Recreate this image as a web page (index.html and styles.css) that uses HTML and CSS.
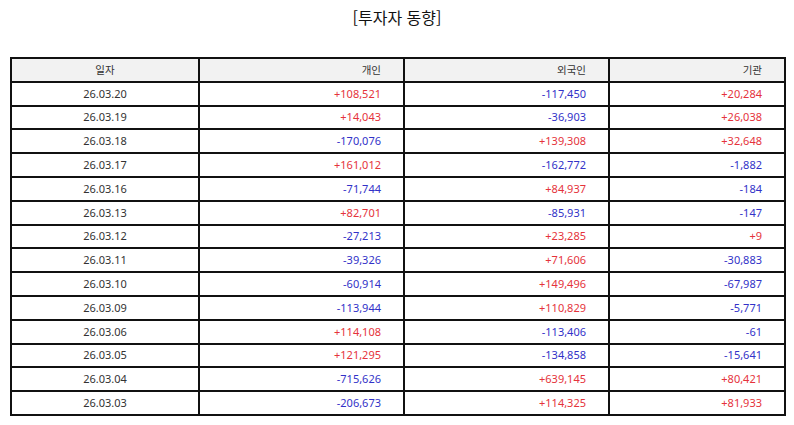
FILE: index.html
```html
<!DOCTYPE html>
<html lang="ko">
<head>
<meta charset="utf-8">
<link rel="stylesheet" href="styles.css">
</head>
<body>
<div class="page">
  <h1 class="title">[투자자 동향]</h1>
  <table class="grid">
    <colgroup>
      <col class="c1"><col class="c2"><col class="c3"><col class="c4">
    </colgroup>
    <thead>
      <tr><th class="date">일자</th><th class="num">개인</th><th class="num">외국인</th><th class="num last">기관</th></tr>
    </thead>
    <tbody>
      <tr><td class="date">26.03.20</td><td class="num up">+108,521</td><td class="num down">-117,450</td><td class="num last up">+20,284</td></tr>
      <tr><td class="date">26.03.19</td><td class="num up">+14,043</td><td class="num down">-36,903</td><td class="num last up">+26,038</td></tr>
      <tr><td class="date">26.03.18</td><td class="num down">-170,076</td><td class="num up">+139,308</td><td class="num last up">+32,648</td></tr>
      <tr><td class="date">26.03.17</td><td class="num up">+161,012</td><td class="num down">-162,772</td><td class="num last down">-1,882</td></tr>
      <tr><td class="date">26.03.16</td><td class="num down">-71,744</td><td class="num up">+84,937</td><td class="num last down">-184</td></tr>
      <tr><td class="date">26.03.13</td><td class="num up">+82,701</td><td class="num down">-85,931</td><td class="num last down">-147</td></tr>
      <tr><td class="date">26.03.12</td><td class="num down">-27,213</td><td class="num up">+23,285</td><td class="num last up">+9</td></tr>
      <tr><td class="date">26.03.11</td><td class="num down">-39,326</td><td class="num up">+71,606</td><td class="num last down">-30,883</td></tr>
      <tr><td class="date">26.03.10</td><td class="num down">-60,914</td><td class="num up">+149,496</td><td class="num last down">-67,987</td></tr>
      <tr><td class="date">26.03.09</td><td class="num down">-113,944</td><td class="num up">+110,829</td><td class="num last down">-5,771</td></tr>
      <tr><td class="date">26.03.06</td><td class="num up">+114,108</td><td class="num down">-113,406</td><td class="num last down">-61</td></tr>
      <tr><td class="date">26.03.05</td><td class="num up">+121,295</td><td class="num down">-134,858</td><td class="num last down">-15,641</td></tr>
      <tr><td class="date">26.03.04</td><td class="num down">-715,626</td><td class="num up">+639,145</td><td class="num last up">+80,421</td></tr>
      <tr><td class="date">26.03.03</td><td class="num down">-206,673</td><td class="num up">+114,325</td><td class="num last up">+81,933</td></tr>
    </tbody>
  </table>
</div>
</body>
</html>
```
FILE: styles.css
```css
html, body {
  margin: 0;
  padding: 0;
  background: #ffffff;
}
body {
  font-family: "Noto Sans", "Noto Sans CJK KR", sans-serif;
  color: #333333;
}
.page {
  padding: 0 10px;
}
.title {
  margin: 0;
  padding-top: 5px;
  height: 57px;
  box-sizing: border-box;
  text-align: center;
  font-size: 16px;
  font-weight: 400;
  line-height: 24px;
  color: #111111;
  font-family: "Noto Sans CJK KR", sans-serif;
}
.grid {
  width: 774px;
  border-collapse: collapse;
  table-layout: fixed;
  font-size: 11px;
}
.c1 { width: 188px; }
.c2 { width: 205px; }
.c3 { width: 205px; }
.c4 { width: 176px; }
.grid th, .grid td {
  border: 2px solid #111111;
  height: 23.8px;
  padding: 0 22px;
  box-sizing: border-box;
  line-height: 14px;
  white-space: nowrap;
}
.grid th {
  background: #f2f2f2;
  font-weight: 400;
  color: #333333;
  font-family: "Noto Sans CJK KR", sans-serif;
  font-size: 10.5px;
}
.date { text-align: center; }
.num { text-align: right; }
.last { padding-right: 18px; }
.up { color: #e5333b; }
.down { color: #3232c8; }
```
